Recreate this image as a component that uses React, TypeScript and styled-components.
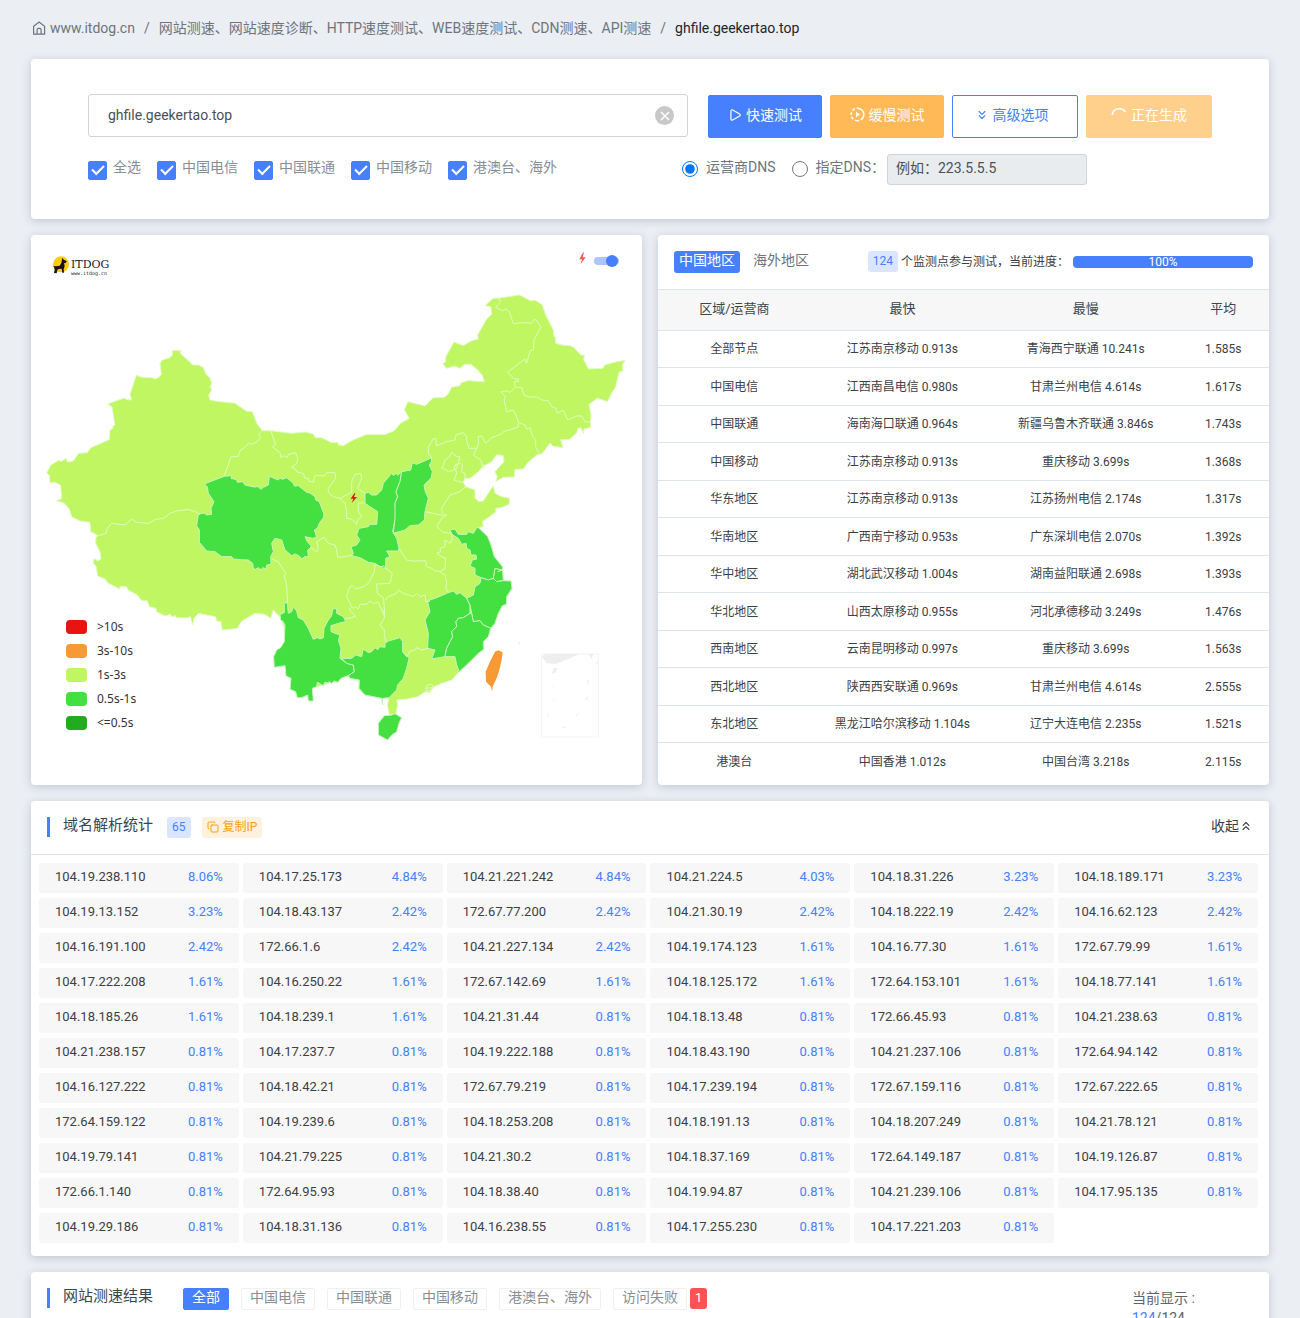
import React, { useState } from "react";
import styled, { createGlobalStyle, css } from "styled-components";
import { ChevronsDown, ChevronsUp, Copy, Play } from "lucide-react";

const BLUE = "#4680ff";
const LINE = "#dee4eb";

const GlobalStyle = createGlobalStyle`
  *, *::before, *::after { box-sizing: border-box; }
  html { scrollbar-width: none; }
  body {
    margin: 0;
    background: #ebeef3;
    color: #3b4045;
    font-family: Roboto, "Noto Sans CJK SC", sans-serif;
    font-size: 14px;
    line-height: 20px;
  }
  button, input { font: inherit; }
  button { cursor: pointer; }
`;

const Page = styled.main`
  display: flex;
  flex-direction: column;
  gap: 16px;
  padding: 18px 31px 0;
`;

const Card = styled.section`
  background: #fff;
  border-radius: 4px;
  box-shadow: 0 2px 8px rgba(69, 85, 120, 0.25);
  min-width: 0;
`;

/* ---------- breadcrumb ---------- */

const Breadcrumb = styled.nav`
  display: flex;
  align-items: center;
  gap: 9px;
  height: 25px;
  padding-bottom: 6px;
  color: #6c757d;
  white-space: nowrap;
`;

const Crumb = styled.a`
  display: flex;
  align-items: center;
  gap: 4px;
  color: inherit;
  text-decoration: none;
`;

const CrumbCurrent = styled.span`
  color: #212529;
`;

/* ---------- query form ---------- */

const QueryCard = styled(Card)`
  display: flex;
  flex-direction: column;
  gap: 16px;
  padding: 35px 57px 34px;
`;

const QueryRow = styled.div`
  display: flex;
  align-items: flex-end;
  gap: 20px;
  height: 44px;
`;

const HostField = styled.div`
  display: flex;
  flex: 1;
  align-self: flex-start;
  align-items: center;
  height: 43px;
  padding: 0 13px 0 19px;
  border: 1px solid #ced4da;
  border-radius: 3px;
`;

const HostInput = styled.input`
  flex: 1;
  min-width: 0;
  padding: 0 0 2px;
  border: 0;
  outline: 0;
  background: none;
  color: #495057;
`;

const ClearButton = styled.button`
  display: grid;
  width: 19px;
  height: 19px;
  padding: 0;
  border: 0;
  border-radius: 50%;
  background: #c8c8c8;
  place-items: center;
`;

const ButtonBar = styled.div`
  display: flex;
  gap: 8px;
`;

type Tone = "primary" | "warning" | "outline";

const tones = {
  primary: css`background: ${BLUE}; border-color: ${BLUE}; color: #fff;`,
  warning: css`background: #ffba57; border-color: #ffba57; color: #fff;`,
  outline: css`background: #fff; border-color: ${BLUE}; color: ${BLUE}; padding-right: 7px;`,
};

const ActionButton = styled.button<{ $tone: Tone; $wide?: boolean }>`
  display: flex;
  align-items: center;
  justify-content: center;
  gap: 4px;
  width: ${(p) => (p.$wide ? 126 : 114)}px;
  height: 43px;
  padding: 0 0 4px;
  border: 1px solid;
  border-radius: 2px;
  white-space: nowrap;
  ${(p) => tones[p.$tone]}
  &:disabled { opacity: 0.68; cursor: default; }
`;

const OptionRow = styled.div`
  display: flex;
  align-items: center;
  height: 31px;
`;

const CheckGroup = styled.div`
  display: flex;
  flex: 1;
  gap: 16px;
`;

const CheckLabel = styled.label`
  display: flex;
  gap: 6px;
  color: #868e96;
  line-height: 16px;
  white-space: nowrap;
`;

const CheckBox = styled.input`
  appearance: none;
  position: relative;
  width: 19px;
  height: 19px;
  margin: 2px 0 0;
  border: 1px solid ${BLUE};
  border-radius: 2px;
  &:checked { background: ${BLUE}; }
  &:checked::after {
    content: "";
    position: absolute;
    top: 3px;
    left: 3px;
    width: 12px;
    height: 7px;
    border: solid #fff;
    border-width: 0 0 2px 2px;
    transform: rotate(-45deg);
  }
`;

const DnsGroup = styled.div`
  display: flex;
  align-items: center;
  gap: 2px;
  width: 530px;
`;

const RadioLabel = styled.label`
  display: flex;
  gap: 8px;
  color: #6c757d;
  line-height: 16px;
  padding-bottom: 3px;
  white-space: nowrap;
`;

const Radio = styled.input`
  width: 16px;
  height: 16px;
  margin: 2px 0 0;
`;

const DnsInput = styled.input`
  width: 200px;
  height: 31px;
  padding: 0 8px 3px;
  border: 1px solid #ced4da;
  border-radius: 3px;
  background: #e9ecef;
  &::placeholder { color: #495057; opacity: 1; }
`;

const RadioSpace = styled.div`
  display: flex;
  gap: 16px;
`;

/* ---------- map ---------- */

const Columns = styled.div`
  display: grid;
  grid-template-columns: 1fr 1fr;
  gap: 16px;
`;

const MapCard = styled(Card)`
  position: relative;
`;

const MapDrawing = styled.svg`
  display: block;
  width: 100%;
  height: auto;
`;

const Brand = styled.div`
  position: absolute;
  top: 21px;
  left: 21px;
  display: flex;
  align-items: flex-start;
  gap: 1px;
`;

const BrandText = styled.div`
  padding-top: 3px;
  color: #222;
  font-family: "DejaVu Serif", serif;
  font-size: 11px;
  line-height: 11px;
`;

const BrandSite = styled.div`
  font-family: "DejaVu Sans Mono", monospace;
  font-size: 5px;
  line-height: 6px;
`;

const MapToggle = styled.label`
  position: absolute;
  top: 17px;
  right: 23px;
  display: flex;
  align-items: center;
  gap: 8px;
`;

const Switch = styled.input`
  appearance: none;
  position: relative;
  width: 25px;
  height: 8px;
  margin: 4px 0 0;
  border-radius: 4px;
  background: #adc5ff;
  &::after {
    content: "";
    position: absolute;
    top: -2px;
    left: 0;
    width: 12px;
    height: 12px;
    border-radius: 50%;
    background: #999;
  }
  &:checked::after { left: 12px; background: ${BLUE}; }
`;

const Legend = styled.ul`
  position: absolute;
  bottom: 50px;
  left: 35px;
  display: flex;
  flex-direction: column;
  margin: 0;
  padding: 0;
  list-style: none;
  color: #333;
  font-family: "Noto Sans", sans-serif;
  font-size: 12px;
  line-height: 24px;
`;

const LegendItem = styled.li<{ $color: string }>`
  display: flex;
  align-items: center;
  gap: 10px;
  &::before {
    content: "";
    width: 21px;
    height: 14px;
    border-radius: 4px;
    background: ${(p) => p.$color};
  }
`;

/* All map coordinates share one frame, three units to a pixel. */
const MAINLAND =
  "50,714 63,690 88,675 92,680 108,670 112,681 130,678 146,655 172,653 183,638 238,614 240,586 250,578 247,574 255,570 246,516 233,507 282,489 292,494 305,495 300,478 319,421 335,427 365,428 375,432 388,426 394,418 390,384 397,375 418,369 427,360 427,347 454,346 450,354 458,362 470,372 488,390 505,390 520,398 528,418 540,430 545,445 540,455 545,465 536,480 540,495 560,499 615,505 650,529 667,530 682,568 697,587 722,587 785,595 825,591 850,597 856,608 875,608 905,623 923,622 926,630 940,632 965,617 1008,599 1065,599 1093,587 1112,565 1138,550 1123,524 1134,500 1185,513 1209,489 1243,487 1255,477 1265,457 1290,452 1293,443 1315,437 1363,440 1357,420 1340,402 1323,388 1303,388 1290,400 1275,393 1250,400 1238,386 1247,380 1247,366 1272,321 1300,332 1323,318 1345,312 1343,300 1370,252 1385,238 1383,215 1365,212 1390,190 1410,189 1468,180 1503,198 1515,195 1537,210 1547,240 1570,285 1572,305 1577,308 1577,325 1595,330 1620,332 1631,337 1652,360 1663,360 1661,375 1667,385 1675,402 1718,400 1725,390 1760,380 1785,376 1777,390 1779,407 1767,412 1757,455 1745,475 1732,500 1702,489 1677,508 1683,540 1681,577 1662,582 1660,595 1653,578 1643,580 1641,593 1617,614 1592,614 1599,638 1570,634 1560,624 1537,655 1520,660 1493,683 1480,702 1455,703 1452,726 1420,727 1397,740 1402,725 1395,710 1422,680 1420,662 1400,659 1383,682 1360,693 1343,712 1320,730 1305,730 1300,742 1307,755 1335,765 1335,790 1347,800 1360,798 1375,775 1390,752 1395,775 1415,785 1439,790 1437,808 1413,818 1397,820 1398,830 1385,840 1357,860 1360,875 1345,878 1373,905 1383,930 1393,965 1417,995 1420,1035 1443,1038 1446,1060 1430,1085 1429,1108 1417,1112 1405,1135 1395,1165 1382,1180 1375,1205 1360,1220 1362,1242 1345,1255 1315,1285 1288,1310 1265,1335 1235,1345 1212,1355 1200,1372 1185,1370 1163,1385 1130,1392 1100,1395 1103,1410 1097,1438 1078,1438 1072,1410 1077,1390 1058,1388 1005,1380 987,1360 988,1335 960,1330 953,1320 933,1330 923,1342 905,1340 885,1348 862,1355 765,1292 763,1180 750,1145 730,1125 722,1150 705,1138 675,1135 635,1158 622,1180 577,1185 573,1160 560,1158 557,1145 505,1135 492,1150 488,1170 483,1150 480,1143 474,1149 440,1148 435,1141 428,1146 420,1138 405,1143 380,1130 378,1120 358,1115 352,1097 335,1097 322,1080 295,1065 290,1055 270,1055 268,1063 260,1057 235,1045 225,1032 203,1023 198,993 190,985 193,970 203,978 213,972 210,950 197,925 198,907 205,902 182,890 180,862 150,858 125,845 118,822 108,810 100,803 80,798 95,790 92,750 75,742 60,743 58,720";

const GREEN_REGIONS: Record<string, string> = {
  qinghai:
    "583,724 605,722 603,730 620,734 622,742 638,740 645,750 672,756 685,755 692,763 700,757 715,750 718,724 745,735 750,730 758,733 770,728 790,745 793,753 805,752 830,772 840,774 855,785 857,795 868,800 882,838 880,848 868,865 862,880 853,885 860,907 848,910 825,905 832,920 845,935 833,945 835,965 824,965 815,972 807,962 795,957 785,962 765,945 755,915 735,910 725,925 730,950 722,965 723,988 710,990 708,1002 698,998 693,1005 685,998 676,1003 670,1000 668,985 655,975 635,974 610,972 605,965 575,965 555,950 530,948 508,922 508,885 500,872 505,838 522,834 530,840 545,838 543,820 552,800 535,775 532,755 523,747 540,740",
  yunnan:
    "768,1100 772,1108 775,1135 785,1130 790,1115 800,1128 805,1148 820,1155 835,1180 850,1213 862,1208 870,1212 880,1208 882,1180 895,1155 905,1142 908,1123 920,1120 920,1135 940,1145 947,1160 925,1165 903,1172 903,1190 915,1195 930,1200 925,1215 933,1240 930,1270 950,1285 970,1290 973,1310 955,1322 933,1330 923,1342 913,1338 905,1345 897,1340 893,1344 885,1341 880,1352 862,1342 860,1355 847,1360 850,1398 835,1398 833,1380 815,1388 802,1388 797,1370 780,1363 783,1330 768,1323 765,1292 733,1297 731,1265 740,1245 752,1238 763,1220 765,1170 758,1158 752,1155 750,1138 763,1133 763,1108",
  guangxi:
    "935,1270 965,1270 977,1260 995,1265 1000,1242 1015,1253 1025,1250 1035,1238 1043,1244 1050,1235 1065,1237 1065,1225 1075,1218 1110,1208 1118,1220 1118,1250 1137,1270 1130,1300 1120,1330 1103,1350 1100,1365 1077,1388 1058,1390 1058,1410 1055,1390 1030,1385 1005,1380 987,1360 988,1335 960,1330 955,1322 973,1310 970,1290 950,1285",
  shaanxi:
    "1005,775 1015,772 1025,780 1040,780 1055,765 1060,745 1085,715 1090,721 1100,715 1103,721 1115,710 1110,740 1098,770 1103,785 1095,805 1098,840 1088,890 1100,910 1107,940 1105,948 1070,948 1080,965 1067,970 1067,1000 1055,998 1035,985 1015,982 990,968 965,962 970,955 963,935 980,930 990,915 980,900 987,880 1015,875 1020,868 1040,868 1043,830 1005,805",
  shanxi:
    "1115,710 1142,705 1147,683 1160,688 1190,675 1205,668 1204,680 1198,690 1207,710 1203,730 1182,750 1186,770 1195,790 1185,830 1183,855 1165,870 1140,872 1125,885 1090,895 1095,850 1095,805 1103,785 1098,770 1110,740",
  jiangsu:
    "1260,885 1275,882 1285,898 1310,898 1315,890 1330,895 1340,878 1345,878 1373,905 1383,930 1393,965 1417,995 1420,1037 1400,1040 1390,1030 1375,1035 1353,1028 1335,1020 1335,1000 1320,993 1327,975 1340,972 1338,960 1323,960 1320,945 1310,940 1308,925 1295,928 1285,910 1268,900",
  jiangxi:
    "1193,1100 1200,1095 1220,1088 1250,1075 1270,1068 1280,1078 1290,1073 1310,1090 1320,1110 1320,1135 1300,1148 1285,1150 1278,1160 1280,1175 1265,1190 1268,1205 1260,1220 1250,1240 1245,1265 1205,1272 1215,1245 1193,1240 1195,1195 1185,1155 1200,1130",
  zhejiang:
    "1353,1028 1375,1035 1390,1030 1400,1040 1420,1037 1443,1038 1446,1060 1430,1085 1429,1108 1417,1112 1405,1135 1395,1165 1382,1180 1360,1170 1350,1157 1330,1160 1325,1135 1320,1110 1310,1090 1330,1080 1335,1055 1350,1045",
  fujian:
    "1320,1135 1325,1135 1330,1160 1350,1157 1360,1170 1382,1180 1375,1205 1360,1220 1362,1242 1345,1255 1315,1285 1288,1310 1280,1290 1275,1265 1245,1265 1250,1240 1260,1220 1268,1205 1265,1190 1280,1175 1278,1160 1285,1150 1300,1148",
  hainan:
    "1045,1465 1063,1442 1085,1440 1095,1436 1115,1448 1108,1462 1100,1490 1085,1500 1073,1515 1045,1500",
};

const BORDERS = [
  "697,587 685,598 692,608 682,620 665,628 660,623 630,648 625,664 602,666 595,690 583,722",
  "205,902 228,895 232,880 245,865 285,870 305,852 320,862 355,865 378,853 400,850 420,835 440,828 475,823 500,832 510,838",
  "725,972 745,980 757,1000 767,1015 763,1025 770,1050 773,1105",
  "722,587 737,628 727,635 752,655 752,668 760,662 772,667 775,658 797,653 803,670 800,685 785,697 797,703 800,711 820,715 825,730 835,730 837,738 850,742 855,722 885,722 890,713 915,713 917,730 895,760 895,772 910,785 930,790 965,772 965,740 975,718 992,715 995,730 983,760 1005,775",
  "930,790 945,805 950,830 950,850 965,852 980,868 982,855 995,845 985,830 985,805 1003,803",
  "840,935 860,950 865,940 860,920 882,907 895,925 915,930 920,945 923,967 945,965 965,960",
  "1205,668 1195,655 1195,635 1205,620 1208,612 1217,610 1220,632 1250,620 1275,615 1278,600 1300,593 1310,605 1311,620 1317,640 1340,640 1346,625 1344,605 1355,603 1367,625 1385,608 1415,597 1420,590 1445,583 1465,575 1465,562 1485,570",
  "1465,562 1460,545 1450,525 1430,530 1422,495 1426,485 1413,470 1428,468 1440,472 1455,457 1475,457",
  "1455,455 1453,440 1465,440 1465,431 1455,433 1432,412 1485,372 1490,385 1500,347 1510,345 1512,315 1533,275 1515,252 1505,264 1475,263 1450,266 1438,230 1426,221 1420,228 1397,217 1412,200 1405,190",
  "1475,457 1482,480 1500,487 1520,485 1535,495 1555,497 1565,515 1578,520 1582,535 1600,525 1613,555 1640,543 1655,543 1665,560 1682,562",
  "1485,570 1490,582 1500,578 1508,605 1517,615 1517,635 1527,655",
  "1340,640 1330,660 1352,675 1358,693",
  "1240,690 1245,675 1258,665 1265,652 1280,665 1290,665 1285,685 1275,690 1273,705 1255,710 1245,703 1235,700 1240,690",
  "1275,690 1292,685 1297,690 1295,712 1305,715 1305,730",
  "1283,690 1277,705 1280,715 1272,735 1285,740 1300,742",
  "1307,755 1290,770 1260,780 1247,800 1235,820 1237,835",
  "1185,830 1210,835 1232,840 1250,840 1235,850 1220,875 1240,892 1262,895",
  "1262,895 1268,910 1260,925 1245,915 1245,935 1230,940 1232,950 1220,955 1235,965 1247,970 1245,1000 1230,1010",
  "1107,940 1130,975 1150,978 1187,977 1190,995 1205,1000 1215,1008 1225,1008 1245,1020 1250,1040 1247,1060 1255,1072",
  "1065,1095 1075,1085 1100,1075 1105,1065 1120,1075 1150,1085 1160,1075 1170,1085 1185,1080 1187,1100 1200,1098",
  "950,1085 955,1065 965,1050 977,1062 1000,1055 1015,1045 1033,1010 1035,988",
  "1035,988 1050,995 1060,993 1087,1015 1080,1045 1040,1047 1042,1075 1060,1088 1063,1115 1062,1140 1055,1125 1045,1102 1030,1105 1020,1098 1010,1108 990,1108 985,1122 975,1115 970,1120 965,1115 958,1100 950,1085",
  "965,1115 958,1125 977,1143 960,1150 947,1150",
  "1063,1115 1063,1150 1050,1170 1063,1185 1063,1200 1067,1220",
  "1118,1250 1130,1265 1140,1248 1155,1245 1160,1238 1175,1245 1193,1240",
  "1188,1358 1192,1350 1206,1348 1209,1356 1203,1366 1190,1368 1186,1360 1208,1358",
  "1390,1030 1395,1000 1417,1005 1403,1010",
];

const TAIWAN =
  "1405,1246 1418,1252 1415,1275 1408,1305 1400,1330 1388,1355 1387,1370 1383,1355 1368,1340 1367,1310 1380,1280 1395,1250";

const INSET = [
  "1536,1265 1547,1257 1648,1257 1615,1272 1578,1287 1550,1285",
  "1675,1257 1690,1257 1684,1273",
  "1570,1300 1582,1298 1576,1313 1566,1317",
  "1672,1335 1676,1333 1676,1350 1672,1347",
  "1704,1275 1696,1288 1702,1286",
  "1568,1343 1572,1358 1569,1356",
  "1579,1384 1567,1398 1570,1398",
  "1675,1380 1664,1396 1671,1394",
  "1550,1430 1557,1445 1553,1445",
  "1649,1425 1636,1445 1641,1443",
  "1596,1475 1612,1474 1600,1480",
];

const BOLT = "M12 0 1 20h8L4 36 20 14h-9L15 0z";

function ChinaMap() {
  return (
    <MapDrawing viewBox="3 0 1833 1650" role="img" aria-label="中国地区测速地图">
      <g stroke="#e2fbc0" strokeWidth="3" strokeLinejoin="round">
        <polygon points={MAINLAND} fill="#bff662" />
        {Object.entries(GREEN_REGIONS).map(([name, points]) => (
          <polygon key={name} points={points} fill="#44df40" stroke="#c9f5c0" />
        ))}
        {BORDERS.map((points) => (
          <polyline key={points} points={points} fill="none" />
        ))}
      </g>
      <polygon points={TAIWAN} fill="#f79a35" />
      <circle cx="1468" cy="1225" r="3" fill="#eee" />
      <rect x="1535" y="1257" width="170" height="249" fill="none" stroke="#f3f3f3" strokeWidth="3" />
      {INSET.map((points) => (
        <polygon key={points} points={points} fill="#eee" />
      ))}
      <path d={BOLT} fill="#e81410" transform="translate(961 775) scale(1 .8)" />
    </MapDrawing>
  );
}

const LEGEND = [
  [">10s", "#e81410"],
  ["3s-10s", "#f79a35"],
  ["1s-3s", "#bff662"],
  ["0.5s-1s", "#44df40"],
  ["<=0.5s", "#23ab20"],
];

/* ---------- statistics table ---------- */

const StatsHeader = styled.header`
  display: flex;
  align-items: flex-start;
  justify-content: space-between;
  height: 54px;
  padding: 16px 16px 0;
  white-space: nowrap;
`;

const RegionTabs = styled.div`
  display: flex;
  gap: 8px;
`;

const RegionTab = styled.button<{ $active?: boolean }>`
  height: 22px;
  padding: 0 5px 4px;
  border: 0;
  border-radius: 3px;
  background: ${(p) => (p.$active ? BLUE : "transparent")};
  color: ${(p) => (p.$active ? "#fff" : "#6c757d")};
  line-height: 18px;
`;

const Progress = styled.div`
  display: flex;
  align-items: center;
  font-size: 12px;
`;

const CountBadge = styled.span`
  display: inline-block;
  height: 21px;
  padding: 0 5px;
  border-radius: 3px;
  background: #dae6ff;
  color: ${BLUE};
  font-size: 12px;
  line-height: 20px;
`;

const ProgressText = styled.span`
  padding: 0 4px 0 3px;
`;

const ProgressTrack = styled.div`
  width: 180px;
  height: 12px;
  border-radius: 4px;
  background: ${BLUE};
  color: #fff;
  line-height: 12px;
  text-align: center;
`;

const StatsTable = styled.table`
  width: 100%;
  border-collapse: collapse;
  table-layout: fixed;
  font-size: 12px;
  line-height: 18px;
  text-align: center;
  white-space: nowrap;
`;

const HeadCell = styled.th<{ $width: string }>`
  width: ${(p) => p.$width};
  height: 41px;
  padding: 0 0 3px;
  border: solid ${LINE};
  border-width: 1px 0;
  background: #f7f7f7;
  color: #37474f;
  font-size: 13px;
  font-weight: 400;
`;

const BodyCell = styled.td`
  padding: 0 0 1px;
`;

const BodyRow = styled.tr`
  height: 37px;
  &:nth-child(even) { height: 38px; }
  &:nth-child(even) ${BodyCell} { padding: 1px 0 0; }
  & + & { border-top: 1px solid ${LINE}; }
`;

const STATS = [
  ["全部节点", "江苏南京移动 0.913s", "青海西宁联通 10.241s", "1.585s"],
  ["中国电信", "江西南昌电信 0.980s", "甘肃兰州电信 4.614s", "1.617s"],
  ["中国联通", "海南海口联通 0.964s", "新疆乌鲁木齐联通 3.846s", "1.743s"],
  ["中国移动", "江苏南京移动 0.913s", "重庆移动 3.699s", "1.368s"],
  ["华东地区", "江苏南京移动 0.913s", "江苏扬州电信 2.174s", "1.317s"],
  ["华南地区", "广西南宁移动 0.953s", "广东深圳电信 2.070s", "1.392s"],
  ["华中地区", "湖北武汉移动 1.004s", "湖南益阳联通 2.698s", "1.393s"],
  ["华北地区", "山西太原移动 0.955s", "河北承德移动 3.249s", "1.476s"],
  ["西南地区", "云南昆明移动 0.997s", "重庆移动 3.699s", "1.563s"],
  ["西北地区", "陕西西安联通 0.969s", "甘肃兰州电信 4.614s", "2.555s"],
  ["东北地区", "黑龙江哈尔滨移动 1.104s", "辽宁大连电信 2.235s", "1.521s"],
  ["港澳台", "中国香港 1.012s", "中国台湾 3.218s", "2.115s"],
];

/* ---------- resolved addresses ---------- */

const SectionHeader = styled.header`
  display: flex;
  align-items: flex-start;
  padding: 16px;
  white-space: nowrap;
`;

const SectionTitle = styled.h2`
  margin: 0;
  padding: 0 0 3px 13px;
  border-left: 3px solid ${BLUE};
  color: #37474f;
  font-size: 15px;
  font-weight: 400;
  line-height: 17px;
`;

const ResolveHeader = styled(SectionHeader)`
  height: 54px;
  border-bottom: 1px solid ${LINE};
`;

const ResolveTools = styled.div`
  display: flex;
  flex: 1;
  gap: 11px;
  padding-left: 14px;
`;

const CopyButton = styled.button`
  display: flex;
  align-items: center;
  gap: 4px;
  height: 21px;
  padding: 0 5px 1px;
  border: 0;
  border-radius: 3px;
  background: #fff1dd;
  color: #ff9f0f;
  font-size: 12px;
`;

const FoldButton = styled.button`
  display: flex;
  align-items: center;
  padding: 0;
  border: 0;
  background: none;
  color: #3b4045;
  line-height: 18px;
`;

const AddressGrid = styled.ul`
  display: grid;
  grid-template-columns: repeat(6, 1fr);
  gap: 5px 4px;
  margin: 0;
  padding: 8px 11px 13px 8px;
  list-style: none;
`;

const Address = styled.li`
  display: flex;
  justify-content: space-between;
  height: 30px;
  padding: 0 16px;
  border-radius: 3px;
  background: #f7f7f7;
  font-size: 13px;
  line-height: 28px;
`;

const Share = styled.span`
  color: ${BLUE};
`;

const ADDRESSES = `104.19.238.110 8.06|104.17.25.173 4.84|104.21.221.242 4.84|104.21.224.5 4.03|104.18.31.226 3.23|104.18.189.171 3.23
104.19.13.152 3.23|104.18.43.137 2.42|172.67.77.200 2.42|104.21.30.19 2.42|104.18.222.19 2.42|104.16.62.123 2.42
104.16.191.100 2.42|172.66.1.6 2.42|104.21.227.134 2.42|104.19.174.123 1.61|104.16.77.30 1.61|172.67.79.99 1.61
104.17.222.208 1.61|104.16.250.22 1.61|172.67.142.69 1.61|104.18.125.172 1.61|172.64.153.101 1.61|104.18.77.141 1.61
104.18.185.26 1.61|104.18.239.1 1.61|104.21.31.44 0.81|104.18.13.48 0.81|172.66.45.93 0.81|104.21.238.63 0.81
104.21.238.157 0.81|104.17.237.7 0.81|104.19.222.188 0.81|104.18.43.190 0.81|104.21.237.106 0.81|172.64.94.142 0.81
104.16.127.222 0.81|104.18.42.21 0.81|172.67.79.219 0.81|104.17.239.194 0.81|172.67.159.116 0.81|172.67.222.65 0.81
172.64.159.122 0.81|104.19.239.6 0.81|104.18.253.208 0.81|104.18.191.13 0.81|104.18.207.249 0.81|104.21.78.121 0.81
104.19.79.141 0.81|104.21.79.225 0.81|104.21.30.2 0.81|104.18.37.169 0.81|172.64.149.187 0.81|104.19.126.87 0.81
172.66.1.140 0.81|172.64.95.93 0.81|104.18.38.40 0.81|104.19.94.87 0.81|104.21.239.106 0.81|104.17.95.135 0.81
104.19.29.186 0.81|104.18.31.136 0.81|104.16.238.55 0.81|104.17.255.230 0.81|104.17.221.203 0.81`
  .split(/[|\n]/)
  .map((entry) => entry.split(" "));

/* ---------- results ---------- */

const Filters = styled.div`
  display: flex;
  flex: 1;
  gap: 12px;
  padding-left: 30px;
`;

const FilterButton = styled.button<{ $active?: boolean }>`
  height: 22px;
  padding: 0 8px 3px;
  border: 1px solid ${(p) => (p.$active ? BLUE : "#eff0f2")};
  border-radius: 2px;
  background: ${(p) => (p.$active ? BLUE : "#fff")};
  color: ${(p) => (p.$active ? "#fff" : "#868e96")};
  line-height: 17px;
`;

const FailedFilter = styled.div`
  display: flex;
  gap: 3px;
`;

const FailedCount = styled.span`
  height: 21px;
  padding: 0 5px;
  border-radius: 3px;
  background: #ff5252;
  color: #fff;
  font-size: 13px;
  line-height: 20px;
`;

const Shown = styled.div`
  width: 121px;
  color: #5c646c;
`;

const ShownNumber = styled.span`
  color: ${BLUE};
`;

const CHECKS = ["全选", "中国电信", "中国联通", "中国移动", "港澳台、海外"];
const FILTERS = ["全部", "中国电信", "中国联通", "中国移动", "港澳台、海外"];

function HomeIcon() {
  return (
    <svg width="15" height="14" viewBox="0 0 15 14" fill="none" stroke="currentColor" strokeWidth="1.2">
      <path d="M2.600 5.200v7.900h11V5.200L8.100 1 2.600 5.200zM6.100 13V8.700a1.400 1.400 0 0 1 1.400-1.400h1.200a1.400 1.400 0 0 1 1.400 1.400V13" />
    </svg>
  );
}

function SlowIcon() {
  return (
    <svg width="15" height="15" viewBox="0 0 15 15" fill="none" stroke="currentColor" strokeWidth="1.5">
      <path d="M7.5 1.2a6.3 6.3 0 0 1 0 12.6" strokeDasharray="16 1.5" />
      <path d="M7.5 13.8a6.3 6.3 0 0 1 0-12.6" strokeDasharray="2.8 1.8" />
      <path d="m6 4.8 4.2 2.700L6 10.200z" fill="currentColor" stroke="none" />
    </svg>
  );
}

function SpinnerIcon() {
  return (
    <svg width="16" height="16" viewBox="0 0 16 16" fill="none" stroke="currentColor" strokeWidth="1.6">
      <path d="M1.300 7.200C2.200 3.800 5 1.800 8.200 1.800c2.600 0 4.600 1 6 2.700" strokeLinecap="round" />
    </svg>
  );
}

function DogLogo() {
  return (
    <svg width="18" height="18" viewBox="0 0 54 54">
      <circle cx="27" cy="25" r="24" fill="#fc1" />
      <path
        d="M31 5l4 6 9 4-2 5-6 2 2 8-3 10 1 10h-5l-2-12-9 1-4 3-2 10-8-1 2-9-1-7-3-5-2-7 2 7 8 1 11-2 5-8z"
        fill="#171411"
      />
    </svg>
  );
}

export default function App() {
  const [host, setHost] = useState("ghfile.geekertao.top");

  return (
    <>
      <GlobalStyle />
      <Page>
        <Breadcrumb aria-label="面包屑">
          <Crumb href="#home">
            <HomeIcon />
            www.itdog.cn
          </Crumb>
          <span>/</span>
          <Crumb href="#http">网站测速、网站速度诊断、HTTP速度测试、WEB速度测试、CDN测速、API测速</Crumb>
          <span>/</span>
          <CrumbCurrent>ghfile.geekertao.top</CrumbCurrent>
        </Breadcrumb>

        <QueryCard as="form" onSubmit={(e: React.FormEvent) => e.preventDefault()}>
          <QueryRow>
            <HostField>
              <HostInput aria-label="网址" value={host} onChange={(e) => setHost(e.target.value)} />
              <ClearButton type="button" aria-label="清空" onClick={() => setHost("")}>
                <svg width="10" height="10" viewBox="0 0 10 10" stroke="#fff" strokeWidth="1.5">
                  <path d="m1 1 8 8M9 1 1 9" />
                </svg>
              </ClearButton>
            </HostField>
            <ButtonBar>
              <ActionButton type="submit" $tone="primary">
                <Play size={14} strokeWidth={2} />
                快速测试
              </ActionButton>
              <ActionButton type="button" $tone="warning">
                <SlowIcon />
                缓慢测试
              </ActionButton>
              <ActionButton type="button" $tone="outline" $wide>
                <ChevronsDown size={14} strokeWidth={2} />
                高级选项
              </ActionButton>
              <ActionButton type="button" $tone="warning" $wide disabled>
                <SpinnerIcon />
                正在生成
              </ActionButton>
            </ButtonBar>
          </QueryRow>
          <OptionRow>
            <CheckGroup>
              {CHECKS.map((name) => (
                <CheckLabel key={name}>
                  <CheckBox type="checkbox" defaultChecked />
                  {name}
                </CheckLabel>
              ))}
            </CheckGroup>
            <DnsGroup>
              <RadioSpace>
                <RadioLabel>
                  <Radio type="radio" name="dns" defaultChecked />
                  运营商DNS
                </RadioLabel>
                <RadioLabel>
                  <Radio type="radio" name="dns" />
                  指定DNS：
                </RadioLabel>
              </RadioSpace>
              <DnsInput aria-label="指定DNS" placeholder="例如：223.5.5.5" disabled />
            </DnsGroup>
          </OptionRow>
        </QueryCard>

        <Columns>
          <MapCard>
            <ChinaMap />
            <Brand>
              <DogLogo />
              <BrandText>
                ITDOG
                <BrandSite>www.itdog.cn</BrandSite>
              </BrandText>
            </Brand>
            <MapToggle>
              <svg width="7" height="13" viewBox="0 0 21 36" aria-hidden="true">
                <path d={BOLT} fill="#ff5252" />
              </svg>
              <Switch type="checkbox" role="switch" aria-label="闪电动画" defaultChecked />
            </MapToggle>
            <Legend>
              {LEGEND.map(([label, color]) => (
                <LegendItem key={label} $color={color}>
                  {label}
                </LegendItem>
              ))}
            </Legend>
          </MapCard>

          <Card>
            <StatsHeader>
              <RegionTabs>
                <RegionTab $active>中国地区</RegionTab>
                <RegionTab>海外地区</RegionTab>
              </RegionTabs>
              <Progress>
                <CountBadge>124</CountBadge>
                <ProgressText>个监测点参与测试，当前进度：</ProgressText>
                <ProgressTrack role="progressbar" aria-label="当前进度" aria-valuenow={100}>
                  100%
                </ProgressTrack>
              </Progress>
            </StatsHeader>
            <StatsTable>
              <thead>
                <tr>
                  <HeadCell $width="25%">区域/运营商</HeadCell>
                  <HeadCell $width="30%">最快</HeadCell>
                  <HeadCell $width="30%">最慢</HeadCell>
                  <HeadCell $width="15%">平均</HeadCell>
                </tr>
              </thead>
              <tbody>
                {STATS.map((row) => (
                  <BodyRow key={row[0]}>
                    {row.map((cell, i) => (
                      <BodyCell key={i}>{cell}</BodyCell>
                    ))}
                  </BodyRow>
                ))}
              </tbody>
            </StatsTable>
          </Card>
        </Columns>

        <Card>
          <ResolveHeader>
            <SectionTitle>域名解析统计</SectionTitle>
            <ResolveTools>
              <CountBadge>65</CountBadge>
              <CopyButton type="button">
                <Copy size={12} strokeWidth={2} />
                复制IP
              </CopyButton>
            </ResolveTools>
            <FoldButton type="button">
              收起
              <ChevronsUp size={14} strokeWidth={2} />
            </FoldButton>
          </ResolveHeader>
          <AddressGrid>
            {ADDRESSES.map(([ip, share]) => (
              <Address key={ip}>
                {ip}
                <Share>{share}%</Share>
              </Address>
            ))}
          </AddressGrid>
        </Card>

        <Card>
          <SectionHeader>
            <SectionTitle>网站测速结果</SectionTitle>
            <Filters>
              {FILTERS.map((name, i) => (
                <FilterButton key={name} type="button" $active={i === 0}>
                  {name}
                </FilterButton>
              ))}
              <FailedFilter>
                <FilterButton type="button">访问失败</FilterButton>
                <FailedCount>1</FailedCount>
              </FailedFilter>
            </Filters>
            <Shown>
              <div>当前显示 :</div>
              <ShownNumber>124</ShownNumber>/124
            </Shown>
          </SectionHeader>
        </Card>
      </Page>
    </>
  );
}
